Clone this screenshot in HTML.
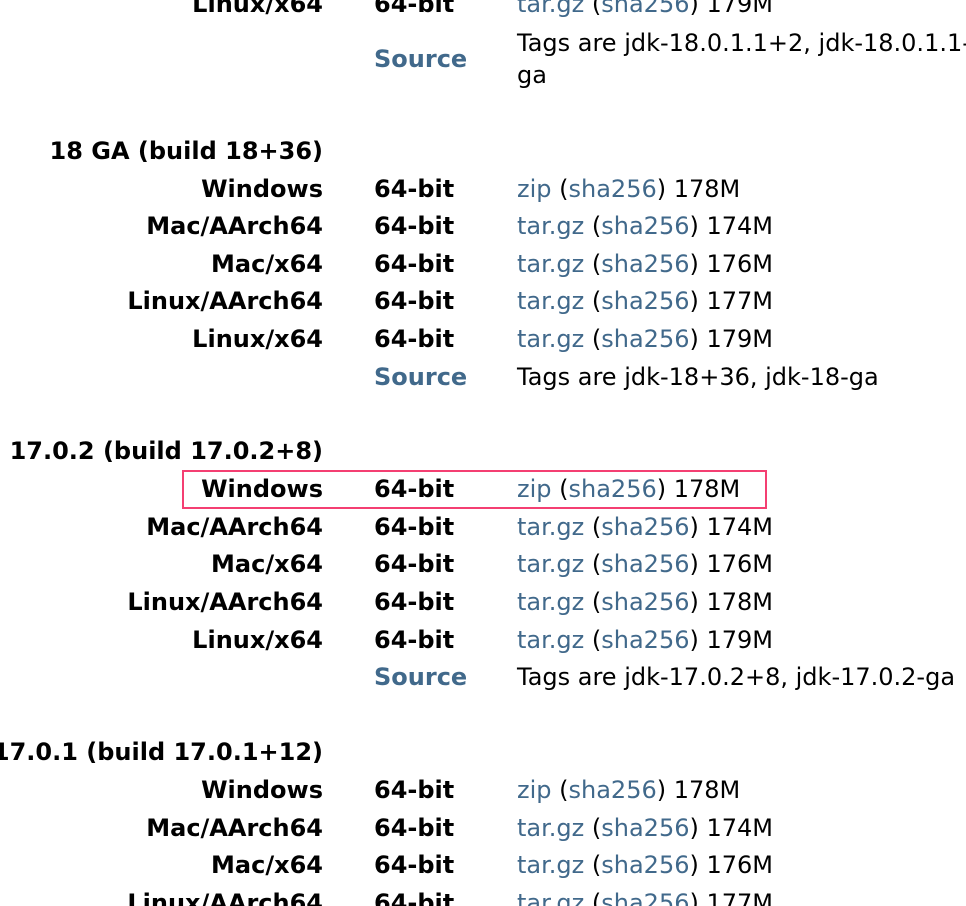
<!DOCTYPE html>
<html><head><meta charset="utf-8"><style>
html,body{margin:0;padding:0;background:#fff;width:966px;height:906px;overflow:hidden;position:relative}
body{font-family:"DejaVu Sans","Liberation Sans",sans-serif;font-size:24px;color:#000}
.a,.b,.c{position:absolute;line-height:32px;white-space:nowrap}
.a{right:643px;font-weight:bold;text-align:right}
.b{left:374px;font-weight:bold}
.c{left:517px}
a,.l{color:#41698b;text-decoration:none}
.s{color:#41698b}
.box{position:absolute;left:182px;top:470px;width:581px;height:35px;border:2px solid #f43f72}
</style></head><body>
<div class="a" style="top:-12px">Linux/x64</div><div class="b" style="top:-12px">64-bit</div><div class="c" style="top:-12px"><span class="l">tar.gz</span> (<span class="l">sha256</span>) 179M</div>
<div class="b s" style="top:43px">Source</div><div class="c" style="top:27px">Tags are jdk-18.0.1.1+2, jdk-18.0.1.1-</div><div class="c" style="top:59px">ga</div>

<div class="a" style="top:135px">18 GA (build 18+36)</div>
<div class="a" style="top:173px">Windows</div><div class="b" style="top:173px">64-bit</div><div class="c" style="top:173px"><span class="l">zip</span> (<span class="l">sha256</span>) 178M</div>
<div class="a" style="top:210px">Mac/AArch64</div><div class="b" style="top:210px">64-bit</div><div class="c" style="top:210px"><span class="l">tar.gz</span> (<span class="l">sha256</span>) 174M</div>
<div class="a" style="top:248px">Mac/x64</div><div class="b" style="top:248px">64-bit</div><div class="c" style="top:248px"><span class="l">tar.gz</span> (<span class="l">sha256</span>) 176M</div>
<div class="a" style="top:285px">Linux/AArch64</div><div class="b" style="top:285px">64-bit</div><div class="c" style="top:285px"><span class="l">tar.gz</span> (<span class="l">sha256</span>) 177M</div>
<div class="a" style="top:323px">Linux/x64</div><div class="b" style="top:323px">64-bit</div><div class="c" style="top:323px"><span class="l">tar.gz</span> (<span class="l">sha256</span>) 179M</div>
<div class="b s" style="top:361px">Source</div><div class="c" style="top:361px">Tags are jdk-18+36, jdk-18-ga</div>

<div class="a" style="top:435px">17.0.2 (build 17.0.2+8)</div>
<div class="box"></div>
<div class="a" style="top:473px">Windows</div><div class="b" style="top:473px">64-bit</div><div class="c" style="top:473px"><span class="l">zip</span> (<span class="l">sha256</span>) 178M</div>
<div class="a" style="top:511px">Mac/AArch64</div><div class="b" style="top:511px">64-bit</div><div class="c" style="top:511px"><span class="l">tar.gz</span> (<span class="l">sha256</span>) 174M</div>
<div class="a" style="top:548px">Mac/x64</div><div class="b" style="top:548px">64-bit</div><div class="c" style="top:548px"><span class="l">tar.gz</span> (<span class="l">sha256</span>) 176M</div>
<div class="a" style="top:586px">Linux/AArch64</div><div class="b" style="top:586px">64-bit</div><div class="c" style="top:586px"><span class="l">tar.gz</span> (<span class="l">sha256</span>) 178M</div>
<div class="a" style="top:624px">Linux/x64</div><div class="b" style="top:624px">64-bit</div><div class="c" style="top:624px"><span class="l">tar.gz</span> (<span class="l">sha256</span>) 179M</div>
<div class="b s" style="top:661px">Source</div><div class="c" style="top:661px">Tags are jdk-17.0.2+8, jdk-17.0.2-ga</div>

<div class="a" style="top:736px">17.0.1 (build 17.0.1+12)</div>
<div class="a" style="top:774px">Windows</div><div class="b" style="top:774px">64-bit</div><div class="c" style="top:774px"><span class="l">zip</span> (<span class="l">sha256</span>) 178M</div>
<div class="a" style="top:812px">Mac/AArch64</div><div class="b" style="top:812px">64-bit</div><div class="c" style="top:812px"><span class="l">tar.gz</span> (<span class="l">sha256</span>) 174M</div>
<div class="a" style="top:849px">Mac/x64</div><div class="b" style="top:849px">64-bit</div><div class="c" style="top:849px"><span class="l">tar.gz</span> (<span class="l">sha256</span>) 176M</div>
<div class="a" style="top:887px">Linux/AArch64</div><div class="b" style="top:887px">64-bit</div><div class="c" style="top:887px"><span class="l">tar.gz</span> (<span class="l">sha256</span>) 177M</div>
</body></html>
